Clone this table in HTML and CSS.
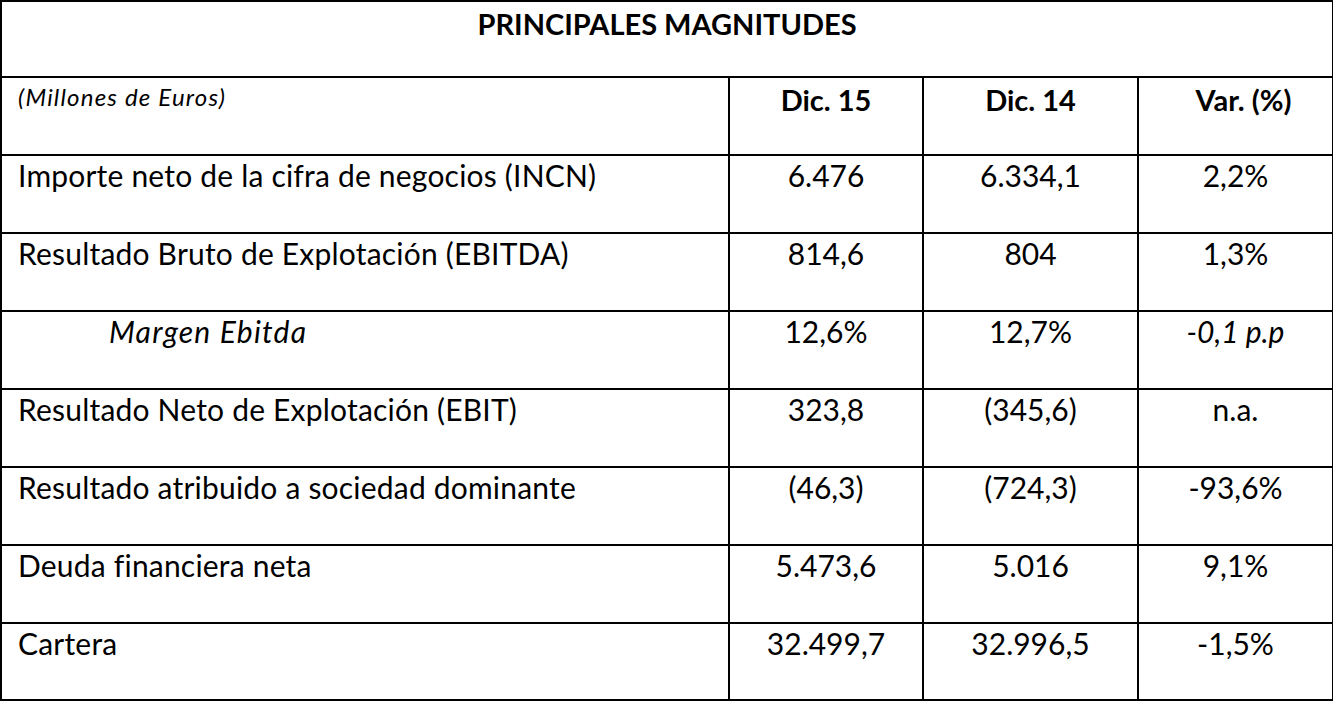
FILE: index.html
```html
<!DOCTYPE html>
<html lang="es">
<head>
<meta charset="utf-8">
<title>Principales magnitudes</title>
<link rel="stylesheet" href="styles.css">
</head>
<body>
<div class="page">
<table class="mag">
  <colgroup>
    <col class="c1"><col class="c2"><col class="c3"><col class="c4">
  </colgroup>
  <tr class="title-row"><th colspan="4" class="title">PRINCIPALES MAGNITUDES</th></tr>
  <tr class="head-row">
    <td class="label unit">(Millones de Euros)</td>
    <th class="num">Dic. 15</th>
    <th class="num">Dic. 14</th>
    <th class="num var">Var. (%)</th>
  </tr>
  <tr><td class="label">Importe neto de la cifra de negocios (INCN)</td><td class="num">6.476</td><td class="num">6.334,1</td><td class="num">2,2%</td></tr>
  <tr><td class="label">Resultado Bruto de Explotación (EBITDA)</td><td class="num">814,6</td><td class="num">804</td><td class="num">1,3%</td></tr>
  <tr><td class="label sub">Margen Ebitda</td><td class="num">12,6%</td><td class="num">12,7%</td><td class="num it">-0,1 p.p</td></tr>
  <tr><td class="label">Resultado Neto de Explotación (EBIT)</td><td class="num">323,8</td><td class="num">(345,6)</td><td class="num">n.a.</td></tr>
  <tr><td class="label">Resultado atribuido a sociedad dominante</td><td class="num">(46,3)</td><td class="num">(724,3)</td><td class="num">-93,6%</td></tr>
  <tr><td class="label">Deuda financiera neta</td><td class="num">5.473,6</td><td class="num">5.016</td><td class="num">9,1%</td></tr>
  <tr class="last"><td class="label">Cartera</td><td class="num">32.499,7</td><td class="num">32.996,5</td><td class="num">-1,5%</td></tr>
</table>
<span class="tick"></span>
</div>
</body>
</html>
```
FILE: styles.css
```css
html, body {
  margin: 0;
  padding: 0;
  background: #fff;
}
.page {
  position: relative;
  width: 1333px;
  height: 701px;
  overflow: hidden;
}
.mag {
  border-collapse: collapse;
  table-layout: fixed;
  width: 1332px;
  font-family: Lato, "Open Sans", sans-serif;
  color: #000;
}
.c1 { width: 728px; }
.c2 { width: 194px; }
.c3 { width: 215px; }
.c4 { width: 195px; }
.mag th, .mag td {
  border: 2px solid #000;
  vertical-align: top;
  padding: 0;
  font-size: 30px;
  line-height: 34px;
  font-weight: 400;
}
.mag tr { height: 78px; }
.mag tr.title-row { height: 76px; }
.mag tr.last { height: 77px; }
.mag th.title {
  font-weight: 700;
  font-size: 29px;
  text-align: center;
  padding-top: 5px;
  padding-left: 2px;
  padding-right: 2px;
}
.mag td.label {
  padding-left: 16px;
  padding-top: 2px;
  letter-spacing: 0.2px;
}
.mag td.num {
  text-align: center;
  padding-top: 2px;
}
.head-row th.num {
  text-align: center;
  font-weight: 700;
  font-size: 29px;
  padding-top: 5px;
}
.head-row th.var {
  padding-left: 16px;
}
.mag td.unit {
  font-style: italic;
  font-size: 24px;
  line-height: 28px;
  letter-spacing: 1.2px;
  padding-top: 5px;
}
.mag td.sub {
  font-style: italic;
  padding-left: 107px;
  letter-spacing: 1.2px;
}
.mag td.it { font-style: italic; }
.tick {
  position: absolute;
  left: 665px;
  top: 699px;
  width: 2px;
  height: 2px;
  background: #000;
}
```
